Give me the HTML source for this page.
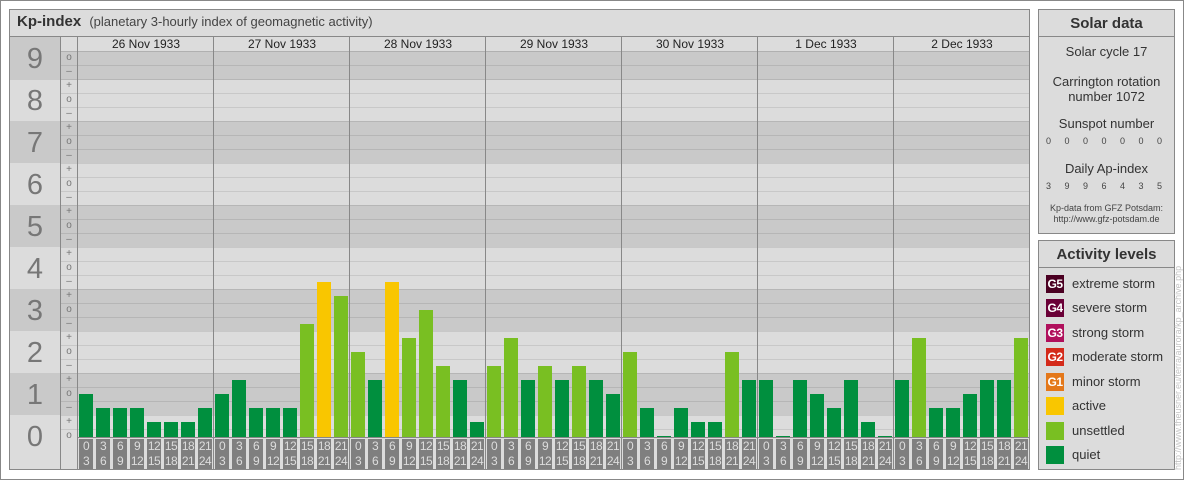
<!DOCTYPE html>
<html><head><meta charset="utf-8"><style>
*{margin:0;padding:0;box-sizing:border-box}
body{width:1184px;height:480px;background:#fff;position:relative;overflow:hidden;font-family:"Liberation Sans",sans-serif;color:#333}
.a{position:absolute}
#frame{left:0;top:0;width:1184px;height:480px;border:1px solid #888}
.panel{background:#dcdcdc;border:1px solid #888}
.band{position:absolute;left:10px;width:1019px}
.dk{background:#c9c9c9}.lt{background:#dcdcdc}
.hl{position:absolute;left:61px;width:968px;height:1px;background:rgba(0,0,0,0.09)}
.num{position:absolute;left:10px;width:50px;text-align:center;font-size:29px;color:#777;line-height:30px}
.sl{position:absolute;left:61px;width:16px;text-align:center;font-size:10px;color:#777;line-height:10px}
.vl{position:absolute;top:37px;width:1px;height:432px;background:#888}
.dt{position:absolute;top:37px;width:136px;height:15px;text-align:center;font-size:12px;line-height:15px;color:#222}
i{position:absolute;width:14px;display:block}
.q{background:#008f3e}.u{background:#79bf22}.y{background:#f9c600}
.t0{top:436px;height:1px}.t1{top:422px;height:15px}.t2{top:408px;height:29px}.t3{top:394px;height:43px}.t4{top:380px;height:57px}.t5{top:366px;height:71px}.t6{top:352px;height:85px}.t7{top:338px;height:99px}.t8{top:324px;height:113px}.t9{top:310px;height:127px}.t10{top:296px;height:141px}.t11{top:282px;height:155px}
b{position:absolute;top:439px;width:14px;height:30px;background:#7f7f7f;color:#ddd;font-weight:normal;font-size:12px;line-height:15px;text-align:center;letter-spacing:-0.6px;white-space:nowrap}
.lg{position:absolute;left:1046px;width:18px;height:18px;color:#fff;font-size:12px;line-height:18px;text-align:center;font-weight:bold;letter-spacing:-0.5px}
.lt2{position:absolute;left:1072px;font-size:13px;color:#333;line-height:18px}
.ct{position:absolute;left:1038px;width:137px;text-align:center;color:#333}
.sm{position:absolute;font-size:9px;color:#444}
</style></head><body>
<div class="a" id="frame"></div>
<div class="a panel" style="left:9px;top:9px;width:1021px;height:461px"></div>
<div class="a" style="left:10px;top:10px;width:1019px;height:27px;border-bottom:1px solid #888;background:#dcdcdc"></div>
<div class="a" style="left:17px;top:13px;font-size:15px;font-weight:bold;color:#333">Kp-index <span style="font-weight:normal;font-size:13px;color:#444;margin-left:4px">(planetary 3-hourly index of geomagnetic activity)</span></div>

<!-- bands -->
<div class="band dk" style="top:37px;height:43px"></div>
<div class="band lt" style="top:80px;height:41px"></div>
<div class="band dk" style="top:121px;height:42px"></div>
<div class="band lt" style="top:163px;height:42px"></div>
<div class="band dk" style="top:205px;height:42px"></div>
<div class="band lt" style="top:247px;height:42px"></div>
<div class="band dk" style="top:289px;height:42px"></div>
<div class="band lt" style="top:331px;height:42px"></div>
<div class="band dk" style="top:373px;height:42px"></div>
<div class="band lt" style="top:415px;height:54px"></div>
<div class="a lt" style="left:61px;top:37px;width:968px;height:15px"></div>
<div class="a lt" style="left:61px;top:437px;width:968px;height:32px"></div>

<div class="hl" style="top:65px"></div><div class="hl" style="top:79px"></div><div class="hl" style="top:93px"></div><div class="hl" style="top:107px"></div><div class="hl" style="top:121px"></div><div class="hl" style="top:135px"></div><div class="hl" style="top:149px"></div><div class="hl" style="top:163px"></div><div class="hl" style="top:177px"></div><div class="hl" style="top:191px"></div><div class="hl" style="top:205px"></div><div class="hl" style="top:219px"></div><div class="hl" style="top:233px"></div><div class="hl" style="top:247px"></div><div class="hl" style="top:261px"></div><div class="hl" style="top:275px"></div><div class="hl" style="top:289px"></div><div class="hl" style="top:303px"></div><div class="hl" style="top:317px"></div><div class="hl" style="top:331px"></div><div class="hl" style="top:345px"></div><div class="hl" style="top:359px"></div><div class="hl" style="top:373px"></div><div class="hl" style="top:387px"></div><div class="hl" style="top:401px"></div><div class="hl" style="top:415px"></div><div class="hl" style="top:429px"></div>
<div class="a" style="left:61px;top:51px;width:968px;height:1px;background:#b0b0b0"></div>

<div class="num" style="top:44px">9</div><div class="num" style="top:86px">8</div><div class="num" style="top:128px">7</div><div class="num" style="top:170px">6</div><div class="num" style="top:212px">5</div><div class="num" style="top:254px">4</div><div class="num" style="top:296px">3</div><div class="num" style="top:338px">2</div><div class="num" style="top:380px">1</div><div class="num" style="top:422px">0</div>

<div class="sl" style="top:53px">o</div><div class="sl" style="top:67px">–</div><div class="sl" style="top:81px">+</div><div class="sl" style="top:95px">o</div><div class="sl" style="top:109px">–</div><div class="sl" style="top:123px">+</div><div class="sl" style="top:137px">o</div><div class="sl" style="top:151px">–</div><div class="sl" style="top:165px">+</div><div class="sl" style="top:179px">o</div><div class="sl" style="top:193px">–</div><div class="sl" style="top:207px">+</div><div class="sl" style="top:221px">o</div><div class="sl" style="top:235px">–</div><div class="sl" style="top:249px">+</div><div class="sl" style="top:263px">o</div><div class="sl" style="top:277px">–</div><div class="sl" style="top:291px">+</div><div class="sl" style="top:305px">o</div><div class="sl" style="top:319px">–</div><div class="sl" style="top:333px">+</div><div class="sl" style="top:347px">o</div><div class="sl" style="top:361px">–</div><div class="sl" style="top:375px">+</div><div class="sl" style="top:389px">o</div><div class="sl" style="top:403px">–</div><div class="sl" style="top:417px">+</div><div class="sl" style="top:431px">o</div>

<div class="vl" style="left:60px"></div><div class="vl" style="left:77px"></div>
<div class="vl" style="left:213px"></div><div class="vl" style="left:349px"></div><div class="vl" style="left:485px"></div><div class="vl" style="left:621px"></div><div class="vl" style="left:757px"></div><div class="vl" style="left:893px"></div>
<div class="a" style="left:77px;top:437px;width:952px;height:1px;background:#888"></div>

<div class="dt" style="left:78px">26 Nov 1933</div><div class="dt" style="left:214px">27 Nov 1933</div><div class="dt" style="left:350px">28 Nov 1933</div><div class="dt" style="left:486px">29 Nov 1933</div><div class="dt" style="left:622px">30 Nov 1933</div><div class="dt" style="left:758px">1 Dec 1933</div><div class="dt" style="left:894px">2 Dec 1933</div>

<!-- bars -->
<i class="q t3" style="left:79px"></i><i class="q t2" style="left:96px"></i><i class="q t2" style="left:113px"></i><i class="q t2" style="left:130px"></i><i class="q t1" style="left:147px"></i><i class="q t1" style="left:164px"></i><i class="q t1" style="left:181px"></i><i class="q t2" style="left:198px"></i>
<i class="q t3" style="left:215px"></i><i class="q t4" style="left:232px"></i><i class="q t2" style="left:249px"></i><i class="q t2" style="left:266px"></i><i class="q t2" style="left:283px"></i><i class="u t8" style="left:300px"></i><i class="y t11" style="left:317px"></i><i class="u t10" style="left:334px"></i>
<i class="u t6" style="left:351px"></i><i class="q t4" style="left:368px"></i><i class="y t11" style="left:385px"></i><i class="u t7" style="left:402px"></i><i class="u t9" style="left:419px"></i><i class="u t5" style="left:436px"></i><i class="q t4" style="left:453px"></i><i class="q t1" style="left:470px"></i>
<i class="u t5" style="left:487px"></i><i class="u t7" style="left:504px"></i><i class="q t4" style="left:521px"></i><i class="u t5" style="left:538px"></i><i class="q t4" style="left:555px"></i><i class="u t5" style="left:572px"></i><i class="q t4" style="left:589px"></i><i class="q t3" style="left:606px"></i>
<i class="u t6" style="left:623px"></i><i class="q t2" style="left:640px"></i><i class="q t0" style="left:657px"></i><i class="q t2" style="left:674px"></i><i class="q t1" style="left:691px"></i><i class="q t1" style="left:708px"></i><i class="u t6" style="left:725px"></i><i class="q t4" style="left:742px"></i>
<i class="q t4" style="left:759px"></i><i class="q t0" style="left:776px"></i><i class="q t4" style="left:793px"></i><i class="q t3" style="left:810px"></i><i class="q t2" style="left:827px"></i><i class="q t4" style="left:844px"></i><i class="q t1" style="left:861px"></i><i class="q t0" style="left:878px"></i>
<i class="q t4" style="left:895px"></i><i class="u t7" style="left:912px"></i><i class="q t2" style="left:929px"></i><i class="q t2" style="left:946px"></i><i class="q t3" style="left:963px"></i><i class="q t4" style="left:980px"></i><i class="q t4" style="left:997px"></i><i class="u t7" style="left:1014px"></i>

<!-- time labels -->
<b style="left:79px">0<br>3</b><b style="left:96px">3<br>6</b><b style="left:113px">6<br>9</b><b style="left:130px">9<br>12</b><b style="left:147px">12<br>15</b><b style="left:164px">15<br>18</b><b style="left:181px">18<br>21</b><b style="left:198px">21<br>24</b>
<b style="left:215px">0<br>3</b><b style="left:232px">3<br>6</b><b style="left:249px">6<br>9</b><b style="left:266px">9<br>12</b><b style="left:283px">12<br>15</b><b style="left:300px">15<br>18</b><b style="left:317px">18<br>21</b><b style="left:334px">21<br>24</b>
<b style="left:351px">0<br>3</b><b style="left:368px">3<br>6</b><b style="left:385px">6<br>9</b><b style="left:402px">9<br>12</b><b style="left:419px">12<br>15</b><b style="left:436px">15<br>18</b><b style="left:453px">18<br>21</b><b style="left:470px">21<br>24</b>
<b style="left:487px">0<br>3</b><b style="left:504px">3<br>6</b><b style="left:521px">6<br>9</b><b style="left:538px">9<br>12</b><b style="left:555px">12<br>15</b><b style="left:572px">15<br>18</b><b style="left:589px">18<br>21</b><b style="left:606px">21<br>24</b>
<b style="left:623px">0<br>3</b><b style="left:640px">3<br>6</b><b style="left:657px">6<br>9</b><b style="left:674px">9<br>12</b><b style="left:691px">12<br>15</b><b style="left:708px">15<br>18</b><b style="left:725px">18<br>21</b><b style="left:742px">21<br>24</b>
<b style="left:759px">0<br>3</b><b style="left:776px">3<br>6</b><b style="left:793px">6<br>9</b><b style="left:810px">9<br>12</b><b style="left:827px">12<br>15</b><b style="left:844px">15<br>18</b><b style="left:861px">18<br>21</b><b style="left:878px">21<br>24</b>
<b style="left:895px">0<br>3</b><b style="left:912px">3<br>6</b><b style="left:929px">6<br>9</b><b style="left:946px">9<br>12</b><b style="left:963px">12<br>15</b><b style="left:980px">15<br>18</b><b style="left:997px">18<br>21</b><b style="left:1014px">21<br>24</b>

<!-- Solar data -->
<div class="a panel" style="left:1038px;top:9px;width:137px;height:225px"></div>
<div class="a" style="left:1039px;top:10px;width:135px;height:27px;border-bottom:1px solid #888"></div>
<div class="ct" style="top:15px;font-size:15px;font-weight:bold">Solar data</div>
<div class="ct" style="top:44px;font-size:13px">Solar cycle 17</div>
<div class="ct" style="top:74px;font-size:13px;line-height:15px">Carrington rotation<br>number 1072</div>
<div class="ct" style="top:116px;font-size:13px">Sunspot number</div>
<div class="sm" style="left:1046px;top:136px;word-spacing:11px">0 0 0 0 0 0 0</div>
<div class="ct" style="top:161px;font-size:13px">Daily Ap-index</div>
<div class="sm" style="left:1046px;top:181px;word-spacing:11px">3 9 9 6 4 3 5</div>
<div class="ct" style="top:203px;font-size:9px;line-height:11px;color:#444">Kp-data from GFZ Potsdam:<br>http://www.gfz-potsdam.de</div>

<!-- Activity levels -->
<div class="a panel" style="left:1038px;top:240px;width:137px;height:230px"></div>
<div class="a" style="left:1039px;top:241px;width:135px;height:27px;border-bottom:1px solid #888"></div>
<div class="ct" style="top:246px;font-size:15px;font-weight:bold">Activity levels</div>
<div class="lg" style="top:275px;background:#4b0022">G5</div><div class="lt2" style="top:275px">extreme storm</div>
<div class="lg" style="top:299px;background:#6a0037">G4</div><div class="lt2" style="top:299px">severe storm</div>
<div class="lg" style="top:324px;background:#b0105c">G3</div><div class="lt2" style="top:324px">strong storm</div>
<div class="lg" style="top:348px;background:#d42a1a">G2</div><div class="lt2" style="top:348px">moderate storm</div>
<div class="lg" style="top:373px;background:#e4781a">G1</div><div class="lt2" style="top:373px">minor storm</div>
<div class="lg" style="top:397px;background:#f9c600"></div><div class="lt2" style="top:397px">active</div>
<div class="lg" style="top:422px;background:#79bf22"></div><div class="lt2" style="top:422px">unsettled</div>
<div class="lg" style="top:446px;background:#008f3e"></div><div class="lt2" style="top:446px">quiet</div>

<div class="a" style="left:1173px;top:470px;transform-origin:0 0;transform:rotate(-90deg);font-size:9px;color:#c4c4c4;white-space:nowrap;width:240px">http://www.theusner.eu/terra/aurora/kp_archive.php</div>
</body></html>
